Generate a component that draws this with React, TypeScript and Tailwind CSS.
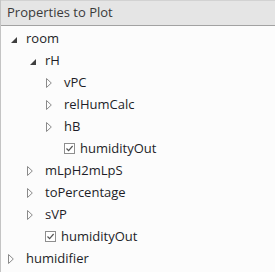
const tree = [
  { label: "room", level: 0, kind: "open" },
  { label: "rH", level: 1, kind: "open" },
  { label: "vPC", level: 2, kind: "closed" },
  { label: "relHumCalc", level: 2, kind: "closed" },
  { label: "hB", level: 2, kind: "closed" },
  { label: "humidityOut", level: 2, kind: "leaf" },
  { label: "mLpH2mLpS", level: 1, kind: "closed" },
  { label: "toPercentage", level: 1, kind: "closed" },
  { label: "sVP", level: 1, kind: "closed" },
  { label: "humidityOut", level: 1, kind: "leaf" },
  { label: "humidifier", level: 0, kind: "closed" },
];

function Expander({ open }: { open: boolean }) {
  return (
    <span className="w-[18px] h-[22px] flex items-center shrink-0">
      {open ? (
        <svg width="6" height="6" viewBox="0 0 6 6" className="ml-[3px] mt-[3px]">
          <polygon points="6,0 6,6 0,6" fill="#3f3f3f" />
        </svg>
      ) : (
        <svg width="6" height="10" viewBox="0 0 6 10" className="mt-[1px]">
          <path d="M0.5 0.5 L5.3 5 L0.5 9.5 Z" fill="none" stroke="#8a8a8a" strokeWidth="1" />
        </svg>
      )}
    </span>
  );
}

function Check() {
  return (
    <span className="w-[11px] h-[11px] border border-[#8e8e8e] bg-white flex items-center justify-center shrink-0 ml-[18px] mr-[5px]">
      <svg width="9" height="9" viewBox="0 0 9 9">
        <path d="M1.5 4.5 L3.6 6.6 L7.6 2" fill="none" stroke="#555" strokeWidth="1.2" />
      </svg>
    </span>
  );
}

export default function App() {
  return (
    <div className="w-[275px] h-[272px] bg-[#fcfcfc] border-l border-[#c4c4c4] overflow-hidden font-['Open_Sans',sans-serif] text-[13px]">
      <div className="h-[26px] bg-[#e5e5e5] border-t border-[#d2d2d2] border-b border-b-[#a2a2a2] flex items-center pl-[6px] text-[#3a3a3a]">
        Properties to Plot
      </div>
      <div className="pt-[1px] flex flex-col">
        {tree.map((n, i) => (
          <div
            key={i}
            className="h-[22px] flex items-center text-[#1e1e28]"
            style={{ paddingLeft: 7 + n.level * 19 }}
          >
            {n.kind === "leaf" ? <Check /> : <Expander open={n.kind === "open"} />}
            <span className="leading-none">{n.label}</span>
          </div>
        ))}
      </div>
    </div>
  );
}
